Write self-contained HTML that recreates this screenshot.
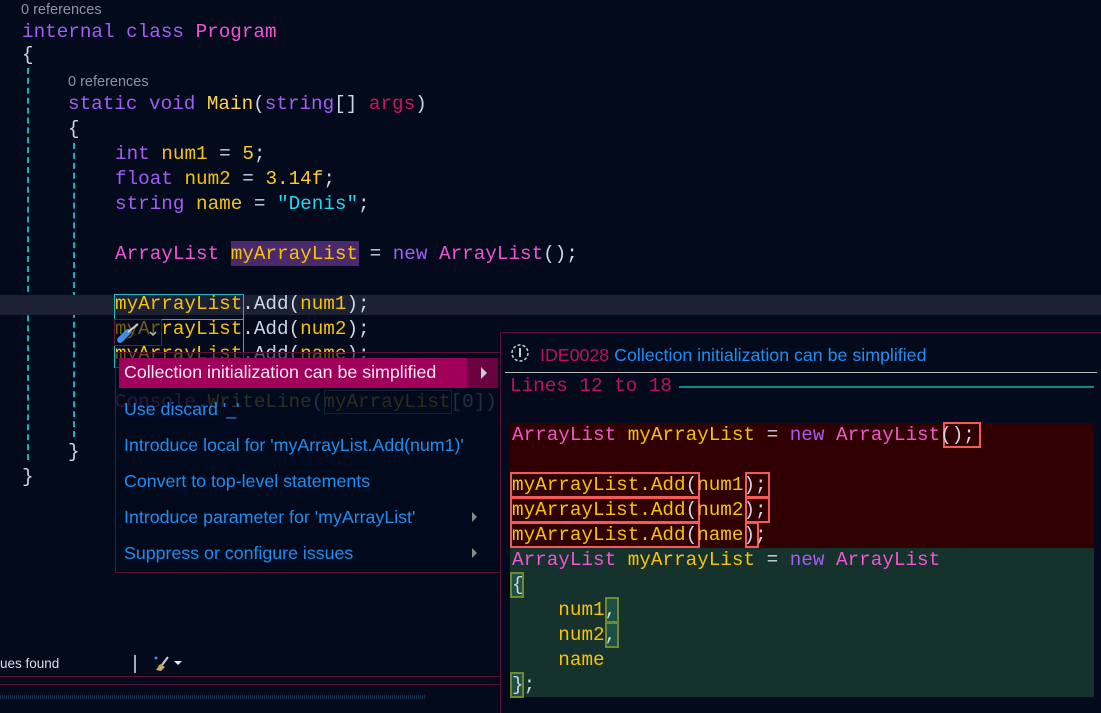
<!DOCTYPE html>
<html><head><meta charset="utf-8"><style>
*{margin:0;padding:0;box-sizing:border-box}
body{width:1101px;height:713px;background:#020a1c;overflow:hidden;position:relative;font-family:"Liberation Mono",monospace;}
.l{position:absolute;white-space:pre;font-size:19.3px;line-height:25px;height:25px;color:#cdd6e4}
.ref{position:absolute;font-family:"Liberation Sans",sans-serif;font-size:14.5px;color:#8d95a3}
.k{color:#a55cf5}.t{color:#f055d2}.y{color:#f6c20a}.m{color:#ffd54a}.s{color:#22d6ee}.a{color:#d1125c}.n{color:#ffcc22}
.g{position:absolute;border-left:2px dashed #0fb2bd;width:0}
.mi{position:absolute;left:124px;font-family:"Liberation Sans",sans-serif;font-size:17.8px;color:#1e8ff0;white-space:pre}
.rb{position:absolute;border:2px solid #f25a5a;height:26px}
.gb{position:absolute;border:2px solid #6f8a2c;background:#1d4f46;height:26px}
</style></head><body>
<div class="ref" style="left:21px;top:2px">0 references</div>
<div class="l" style="left:22px;top:20px"><span class="k">internal class</span> <span class="t">Program</span></div>
<div class="l" style="left:22px;top:43px">{</div>
<div class="g" style="left:27px;top:68px;height:392px"></div>
<div class="ref" style="left:68px;top:74px">0 references</div>
<div class="l" style="left:68px;top:92px"><span class="k">static void</span> <span class="m">Main</span>(<span class="k">string</span>[] <span class="a">args</span>)</div>
<div class="l" style="left:68px;top:117px">{</div>
<div class="g" style="left:73px;top:143px;height:294px"></div>
<div class="l" style="left:115px;top:142px"><span class="k">int</span> <span class="y">num1</span> = <span class="n">5</span>;</div>
<div class="l" style="left:115px;top:167px"><span class="k">float</span> <span class="y">num2</span> = <span class="n">3.14f</span>;</div>
<div class="l" style="left:115px;top:192px"><span class="k">string</span> <span class="y">name</span> = <span class="s">"Denis"</span>;</div>
<div style="position:absolute;left:231px;top:241px;width:128px;height:25px;background:#4a2a6c"></div>
<div class="l" style="left:115px;top:242px"><span class="t">ArrayList</span> <span class="y">myArrayList</span> = <span class="k">new</span> <span class="t">ArrayList</span>();</div>
<div style="position:absolute;left:0;top:295px;width:1101px;height:20px;background:#1c2136"></div>
<div style="position:absolute;left:114px;top:294px;width:130px;height:74px;border:1px solid #1fb7c4"></div>
<div style="position:absolute;left:114px;top:319px;width:130px;height:0;border-top:1px solid #1fb7c4"></div>
<div class="l" style="left:115px;top:292px"><span class="y">myArrayList</span>.Add(<span class="y">num1</span>);</div>
<div class="l" style="left:115px;top:317px"><span class="y">myArrayList</span>.Add(<span class="y">num2</span>);</div>
<div class="l" style="left:115px;top:342px"><span class="y">myArrayList</span>.Add(<span class="y">name</span>);</div>
<div style="position:absolute;left:114px;top:319px;width:48px;height:27px;border:1px solid #6b1a3a;background:rgba(2,10,28,.55)"></div>
<svg style="position:absolute;left:116px;top:322px" width="44" height="24" viewBox="0 0 44 24"><path d="M4 18 L12 10" stroke="#3d8fe0" stroke-width="6" stroke-linecap="round"/><path d="M12 10 L22 2" stroke="#ccc" stroke-width="2"/><path d="M34 10 L37 13 L40 10" stroke="#bbb" stroke-width="1.5" fill="none"/></svg>
<div class="l" style="left:115px;top:390px;opacity:.45"><span class="t">Console</span>.<span class="m">WriteLine</span>(<span class="y">myArrayList</span>[0]);</div>
<div style="position:absolute;left:324px;top:390px;width:128px;height:24px;border:1px solid #1a4a55"></div>
<div class="l" style="left:68px;top:440px">}</div>
<div class="l" style="left:22px;top:465px">}</div>
<!-- menu -->
<div style="position:absolute;left:115px;top:352px;width:386px;height:221px;border:1px solid #5a1034;background:rgba(2,10,28,.6)"></div>
<div style="position:absolute;left:119px;top:358px;width:379px;height:30px;background:#a0005a"></div>
<div style="position:absolute;left:467px;top:358px;width:31px;height:30px;background:#6a0140"></div>
<div style="position:absolute;left:481px;top:367px;border-left:6px solid #ccc;border-top:6px solid transparent;border-bottom:6px solid transparent"></div>
<div class="mi" style="color:#f0e8f0;top:362px">Collection initialization can be simplified</div>
<div class="mi" style="top:399px">Use discard '_'</div>
<div class="mi" style="top:435px">Introduce local for 'myArrayList.Add(num1)'</div>
<div class="mi" style="top:471px">Convert to top-level statements</div>
<div class="mi" style="top:507px">Introduce parameter for 'myArrayList'</div>
<div class="mi" style="top:543px">Suppress or configure issues</div>
<div style="position:absolute;left:472px;top:512px;border-left:5px solid #888;border-top:5px solid transparent;border-bottom:5px solid transparent"></div>
<div style="position:absolute;left:472px;top:548px;border-left:5px solid #888;border-top:5px solid transparent;border-bottom:5px solid transparent"></div>
<!-- bottom -->
<div style="position:absolute;left:0;top:656px;font-family:'Liberation Sans',sans-serif;font-size:13.5px;color:#d8dde6">ues found</div>
<div style="position:absolute;left:134px;top:655px;width:2px;height:18px;background:#aab"></div>
<svg style="position:absolute;left:152px;top:654px" width="32" height="18"><path d="M4 16 L8 10 L13 13 L9 17Z" fill="#c9a86a"/><path d="M10 11 L16 3" stroke="#ccc" stroke-width="2"/><circle cx="4" cy="4" r="1.5" fill="#3d8fe0"/><path d="M22 7 L30 7 L26 11Z" fill="#eee"/></svg>
<div style="position:absolute;left:0;top:676px;width:500px;height:1px;background:#5a1034"></div>
<div style="position:absolute;left:0;top:684px;width:500px;height:1px;background:#5a1034"></div>
<div style="position:absolute;left:0;top:695px;width:425px;height:4px;background:repeating-linear-gradient(90deg,#17304a 0 1px,transparent 1px 2px)"></div>
<!-- preview -->
<div style="position:absolute;left:500px;top:332px;width:601px;height:381px;background:#020a1c;border-left:1px solid #5a1034;border-top:1px solid #5a1034"></div>
<svg style="position:absolute;left:510px;top:343px" width="20" height="20"><circle cx="10" cy="10" r="8" fill="none" stroke="#ccc" stroke-width="1.5" stroke-dasharray="3 2"/><rect x="9" y="5" width="2" height="9" fill="#ccc"/></svg>
<div style="position:absolute;left:540px;top:345px;font-family:'Liberation Sans',sans-serif;font-size:17.8px;color:#1e8ff0;white-space:pre"><span style="color:#c0105a">IDE0028</span> Collection initialization can be simplified</div>
<div style="position:absolute;left:505px;top:372px;width:592px;height:1px;background:#bbb"></div>
<div class="l" style="left:510px;top:374px;color:#c0105a">Lines 12 to 18</div>
<div style="position:absolute;left:679px;top:386px;width:415px;height:2px;background:#0e8a8a"></div>
<div style="position:absolute;left:510px;top:423px;width:584px;height:125px;background:#300000"></div>
<div style="position:absolute;left:510px;top:548px;width:584px;height:149px;background:#16322c"></div>
<div class="rb" style="left:943px;top:422px;width:38px"></div>
<div class="rb" style="left:510px;top:472px;width:190px"></div>
<div class="rb" style="left:510px;top:497px;width:190px"></div>
<div class="rb" style="left:510px;top:522px;width:190px"></div>
<div class="rb" style="left:745px;top:472px;width:25px"></div>
<div class="rb" style="left:745px;top:497px;width:25px"></div>
<div class="rb" style="left:745px;top:522px;width:14px"></div>
<div class="gb" style="left:510px;top:572px;width:14px"></div>
<div class="gb" style="left:605px;top:597px;width:14px"></div>
<div class="gb" style="left:605px;top:622px;width:14px"></div>
<div class="gb" style="left:510px;top:672px;width:14px"></div>
<div class="l" style="left:512px;top:423px"><span class="t">ArrayList</span> <span class="y">myArrayList</span> = <span class="k">new</span> <span class="t">ArrayList</span>();</div>
<div class="l" style="left:512px;top:473px"><span class="y">myArrayList.Add</span>(<span class="y">num1</span>);</div>
<div class="l" style="left:512px;top:498px"><span class="y">myArrayList.Add</span>(<span class="y">num2</span>);</div>
<div class="l" style="left:512px;top:523px"><span class="y">myArrayList.Add</span>(<span class="y">name</span>);</div>
<div class="l" style="left:512px;top:548px"><span class="t">ArrayList</span> <span class="y">myArrayList</span> = <span class="k">new</span> <span class="t">ArrayList</span></div>
<div class="l" style="left:512px;top:573px">{</div>
<div class="l" style="left:512px;top:598px">    <span class="y">num1</span>,</div>
<div class="l" style="left:512px;top:623px">    <span class="y">num2</span>,</div>
<div class="l" style="left:512px;top:648px">    <span class="y">name</span></div>
<div class="l" style="left:512px;top:673px">};</div>
</body></html>
